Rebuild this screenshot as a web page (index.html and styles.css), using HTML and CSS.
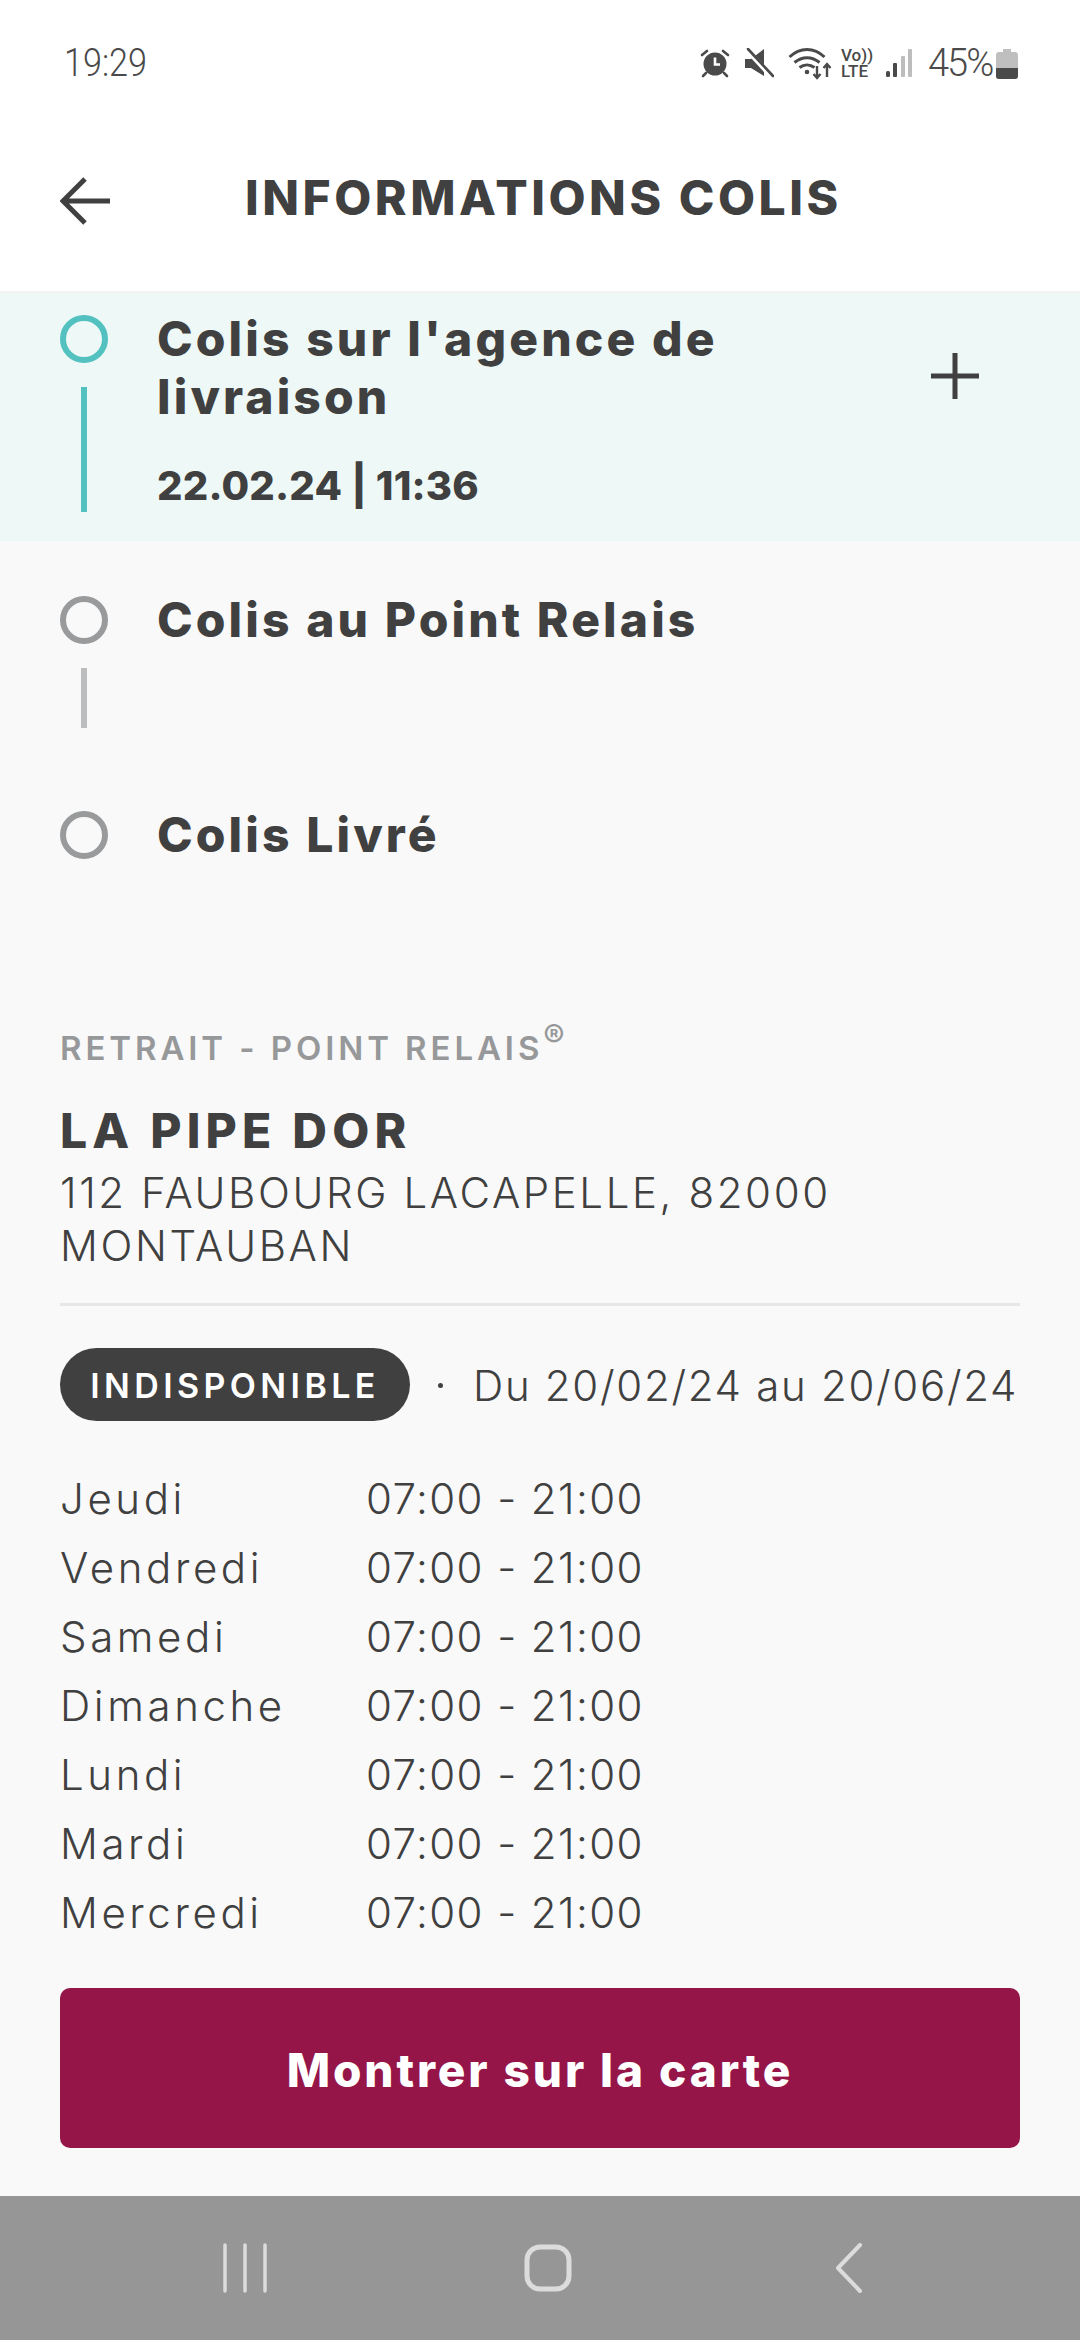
FILE: index.html
```html
<!DOCTYPE html>
<html>
<head>
<meta charset="UTF-8">
<title>Informations colis</title>
<link rel="stylesheet" href="styles.css">
</head>
<body>
<div class="page">
	<div class="status_bar">
		<span class="status_time">19:29</span>
		<div class="status_icons">
			<svg class="ic_alarm" width="30" height="30" viewBox="0 0 30 30">
				<circle cx="15" cy="16" r="11.5" fill="#4a4a4a"/>
				<path d="M15 9.5v7h5" fill="none" stroke="#fff" stroke-width="2.6"/>
				<path d="M2 7l5-4M28 7l-5-4M6 25l-3 3M24 25l3 3" fill="none" stroke="#4a4a4a" stroke-width="2.6" stroke-linecap="round"/>
			</svg>
			<svg class="ic_mute" width="30" height="30" viewBox="0 0 30 30">
				<path d="M1 11h6l13-10v20z M1 11v9h6l13 8v-7z" fill="#4a4a4a"/>
				<path d="M3 2l25 27" stroke="#fff" stroke-width="5"/>
				<path d="M4 1l25 27" stroke="#4a4a4a" stroke-width="2.6" stroke-linecap="round"/>
			</svg>
			<svg class="ic_wifi" width="44" height="34" viewBox="0 0 44 34">
				<path d="M1.500 11C12 1 26 1 36.500 11M6.500 16.500C14 10 24 10 31.500 16.500M11.500 21.500C16 18 22 18 26.500 21.500" fill="none" stroke="#4a4a4a" stroke-width="3"/>
				<circle cx="19" cy="26" r="2.300" fill="#4a4a4a"/>
				<path d="M29 20v12M25.500 28l3.500 4 3.500-4M39 31V18M35.500 22l3.500-4 3.500 4" fill="none" stroke="#4a4a4a" stroke-width="2.400"/>
			</svg>
			<div class="ic_volte"><span>Vo))</span><span>LTE</span></div>
			<svg class="ic_signal" width="28" height="30" viewBox="0 0 28 30">
				<rect x="1" y="23" width="4" height="6" rx="1.500" fill="#4a4a4a"/>
				<rect x="8" y="15" width="4" height="14" rx="1" fill="#4a4a4a"/>
				<rect x="16" y="8" width="4" height="21" rx="1" fill="#bdbdbd"/>
				<rect x="23" y="1" width="4" height="28" rx="1" fill="#bdbdbd"/>
			</svg>
			<span class="status_pct">45%</span>
			<svg class="ic_batt" width="22" height="31" viewBox="0 0 22 31">
				<path d="M7 1h8v3h4a3 3 0 0 1 3 3v21a3 3 0 0 1-3 3H3a3 3 0 0 1-3-3V7a3 3 0 0 1 3-3h4z" fill="#bfbfbf"/>
				<path d="M0 20h22v8a3 3 0 0 1-3 3H3a3 3 0 0 1-3-3z" fill="#4a4a4a"/>
			</svg>
		</div>
	</div>

	<div class="header">
		<svg class="ic_back" width="50" height="48" viewBox="0 0 50 48">
			<path d="M25 2L3 24l22 22M3 24h47" fill="none" stroke="#404040" stroke-width="5"/>
		</svg>
		<h1 class="header_title">INFORMATIONS COLIS</h1>
	</div>

	<div class="step step_current">
		<div class="step_marker">
			<span class="dot dot_on"></span>
			<span class="bar bar_on"></span>
		</div>
		<div class="step_body">
			<div class="step_title">Colis sur l'agence de livraison</div>
			<div class="step_date">22.02.24 | 11:36</div>
		</div>
		<svg class="ic_plus" width="50" height="50" viewBox="0 0 50 50">
			<path d="M25 2v46M1 25h48" stroke="#404040" stroke-width="5"/>
		</svg>
	</div>
	<div class="step step_next">
		<div class="step_marker">
			<span class="dot"></span>
			<span class="bar"></span>
		</div>
		<div class="step_body">
			<div class="step_title">Colis au Point Relais</div>
		</div>
	</div>
	<div class="step step_last">
		<div class="step_marker">
			<span class="dot"></span>
		</div>
		<div class="step_body">
			<div class="step_title">Colis Livré</div>
		</div>
	</div>

	<div class="relay">
		<div class="relay_label">RETRAIT - POINT RELAIS<sup>®</sup></div>
		<div class="relay_name">LA PIPE DOR</div>
		<div class="relay_addr">112 FAUBOURG LACAPELLE, 82000 MONTAUBAN</div>
		<div class="relay_line"></div>
		<div class="relay_state">
			<span class="badge">INDISPONIBLE</span>
			<span class="state_sep"></span>
			<span class="state_dates">Du 20/02/24 au 20/06/24</span>
		</div>
		<div class="hours">
			<span class="day">Jeudi</span><span>07:00 - 21:00</span>
			<span class="day">Vendredi</span><span>07:00 - 21:00</span>
			<span class="day">Samedi</span><span>07:00 - 21:00</span>
			<span class="day">Dimanche</span><span>07:00 - 21:00</span>
			<span class="day">Lundi</span><span>07:00 - 21:00</span>
			<span class="day">Mardi</span><span>07:00 - 21:00</span>
			<span class="day">Mercredi</span><span>07:00 - 21:00</span>
		</div>
		<div class="btn_map">Montrer sur la carte</div>
	</div>

	<div class="nav_bar">
		<svg width="48" height="50" viewBox="0 0 48 50">
			<path d="M4 2v46M24 2v46M44 2v46" stroke="#dcdcdc" stroke-width="3.500" stroke-linecap="round"/>
		</svg>
		<svg width="48" height="50" viewBox="0 0 48 50">
			<rect x="3" y="4" width="42" height="42" rx="13" fill="none" stroke="#dcdcdc" stroke-width="5"/>
		</svg>
		<svg width="48" height="50" viewBox="0 0 48 50">
			<path d="M33 2L11 25l22 23" fill="none" stroke="#dcdcdc" stroke-width="4" stroke-linecap="round" stroke-linejoin="round"/>
		</svg>
	</div>
</div>
</body>
</html>
```

FILE: styles.css
```css
*{
	margin:0;
	padding:0;
	box-sizing:border-box;
}
body{
	width:1080px;
	height:2340px;
	overflow:hidden;
	font-family:"Inter","Liberation Sans",sans-serif;
	color:#404040;
}
.page{
	width:1080px;
	height:2340px;
	background-color:#f9f9f9;
	display:flex;
	flex-direction:column;
}
.status_bar{
	height:124px;
	background-color:#fff;
	display:flex;
	justify-content:space-between;
	align-items:flex-start;
	padding:44px 62px 0 64px;
}
.status_time{
	font-family:"Roboto",sans-serif;
	font-weight:300;
	font-size:38px;
	line-height:38px;
	color:#4a4a4a;
	transform:scaleX(.9);
	transform-origin:left;
}
.status_icons{
	display:flex;
	align-items:center;
	height:38px;
}
.ic_alarm{margin-right:14px;}
.ic_mute{margin-right:14px;}
.ic_wifi{margin-right:9px;}
.ic_signal{margin-left:13px;margin-right:15px;}
.ic_volte{
	display:flex;
	flex-direction:column;
	font-family:"Roboto",sans-serif;
	font-weight:500;
	font-size:17px;
	line-height:16px;
	color:#4a4a4a;
	width:31px;
}
.status_pct{
	font-family:"Roboto",sans-serif;
	font-weight:300;
	font-size:38px;
	line-height:38px;
	color:#4a4a4a;
	width:68px;
	letter-spacing:-2px;
}
.header{
	height:169px;
	background-color:#fff;
	border-bottom:2px solid #f2f2f2;
	display:flex;
	align-items:center;
	padding:0 0 0 60px;
}
.ic_back{
	margin-top:-14px;
}
.header_title{
	margin-left:135px;
	margin-top:-21px;
	font-size:48px;
	font-weight:800;
	letter-spacing:3.55px;
	white-space:nowrap;
}
.step{
	display:flex;
	padding-left:60px;
}
.step_current{
	background-color:#eef8f6;
	height:248px;
	padding-top:22px;
	position:relative;
}
.step_next{
	height:215px;
	padding-top:55px;
}
.step_last{
	height:272px;
	padding-top:55px;
}
.step_marker{
	width:48px;
	display:flex;
	flex-direction:column;
	align-items:center;
}
.dot{
	width:48px;
	height:48px;
	border-radius:50%;
	border:6px solid #999a9c;
}
.dot_on{
	border-color:#52c1bf;
}
.bar{
	width:6px;
	height:60px;
	margin-top:24px;
	background-color:#bcbdbf;
}
.bar_on{
	height:125px;
	background-color:#52c1bf;
}
.step_body{
	margin-left:49px;
	width:600px;
}
.step_title{
	font-size:48px;
	line-height:58px;
	font-weight:800;
	letter-spacing:3.1px;
	margin-top:-5px;
}
.step_date{
	margin-top:36px;
	font-size:40px;
	line-height:48px;
	font-weight:800;
	letter-spacing:.2px;
}
.ic_plus{
	position:absolute;
	top:58px;
	left:930px;
}
.relay{
	padding:0 60px;
	display:flex;
	flex-direction:column;
	flex:1;
}
.relay_label{
	font-size:33px;
	line-height:40px;
	font-weight:600;
	color:#97989a;
	letter-spacing:3.9px;
}
.relay_label sup{
	font-size:32px;
	line-height:0;
	letter-spacing:0;
}
.relay_name{
	margin-top:35px;
	font-size:48px;
	line-height:56px;
	font-weight:800;
	letter-spacing:5.2px;
}
.relay_addr{
	margin-top:7px;
	font-size:42px;
	line-height:53px;
	font-weight:300;
	width:900px;
	letter-spacing:2.6px;
}
.relay_line{
	height:3px;
	margin-top:31px;
	background-color:#e6e7e8;
}
.relay_state{
	display:flex;
	align-items:center;
	margin-top:42px;
}
.badge{
	width:350px;
	height:73px;
	padding-top:2px;
	border-radius:37px;
	background-color:#404040;
	color:#fff;
	font-size:34px;
	font-weight:600;
	letter-spacing:4.400px;
	display:flex;
	align-items:center;
	justify-content:center;
}
.state_sep{
	width:5px;
	height:5px;
	border-radius:50%;
	background-color:#404040;
	margin:2px 30px 0 28px;
}
.state_dates{
	font-size:42px;
	font-weight:300;
	letter-spacing:1.7px;
	white-space:nowrap;
	margin-top:2px;
}
.hours{
	display:grid;
	grid-template-columns:306px 1fr;
	grid-auto-rows:69px;
	align-items:center;
	margin-top:43px;
	font-size:42px;
	font-weight:300;
	letter-spacing:1.4px;
}
.day{
	letter-spacing:3.6px;
}
.btn_map{
	height:160px;
	padding-top:3px;
	margin-top:41px;
	border-radius:10px;
	background-color:#951548;
	color:#fff;
	font-size:46px;
	font-weight:800;
	letter-spacing:2.9px;
	display:flex;
	align-items:center;
	justify-content:center;
}
.nav_bar{
	height:144px;
	background-color:#969696;
	display:flex;
	align-items:center;
	justify-content:center;
	gap:255px;
	padding-left:16px;
}
```
